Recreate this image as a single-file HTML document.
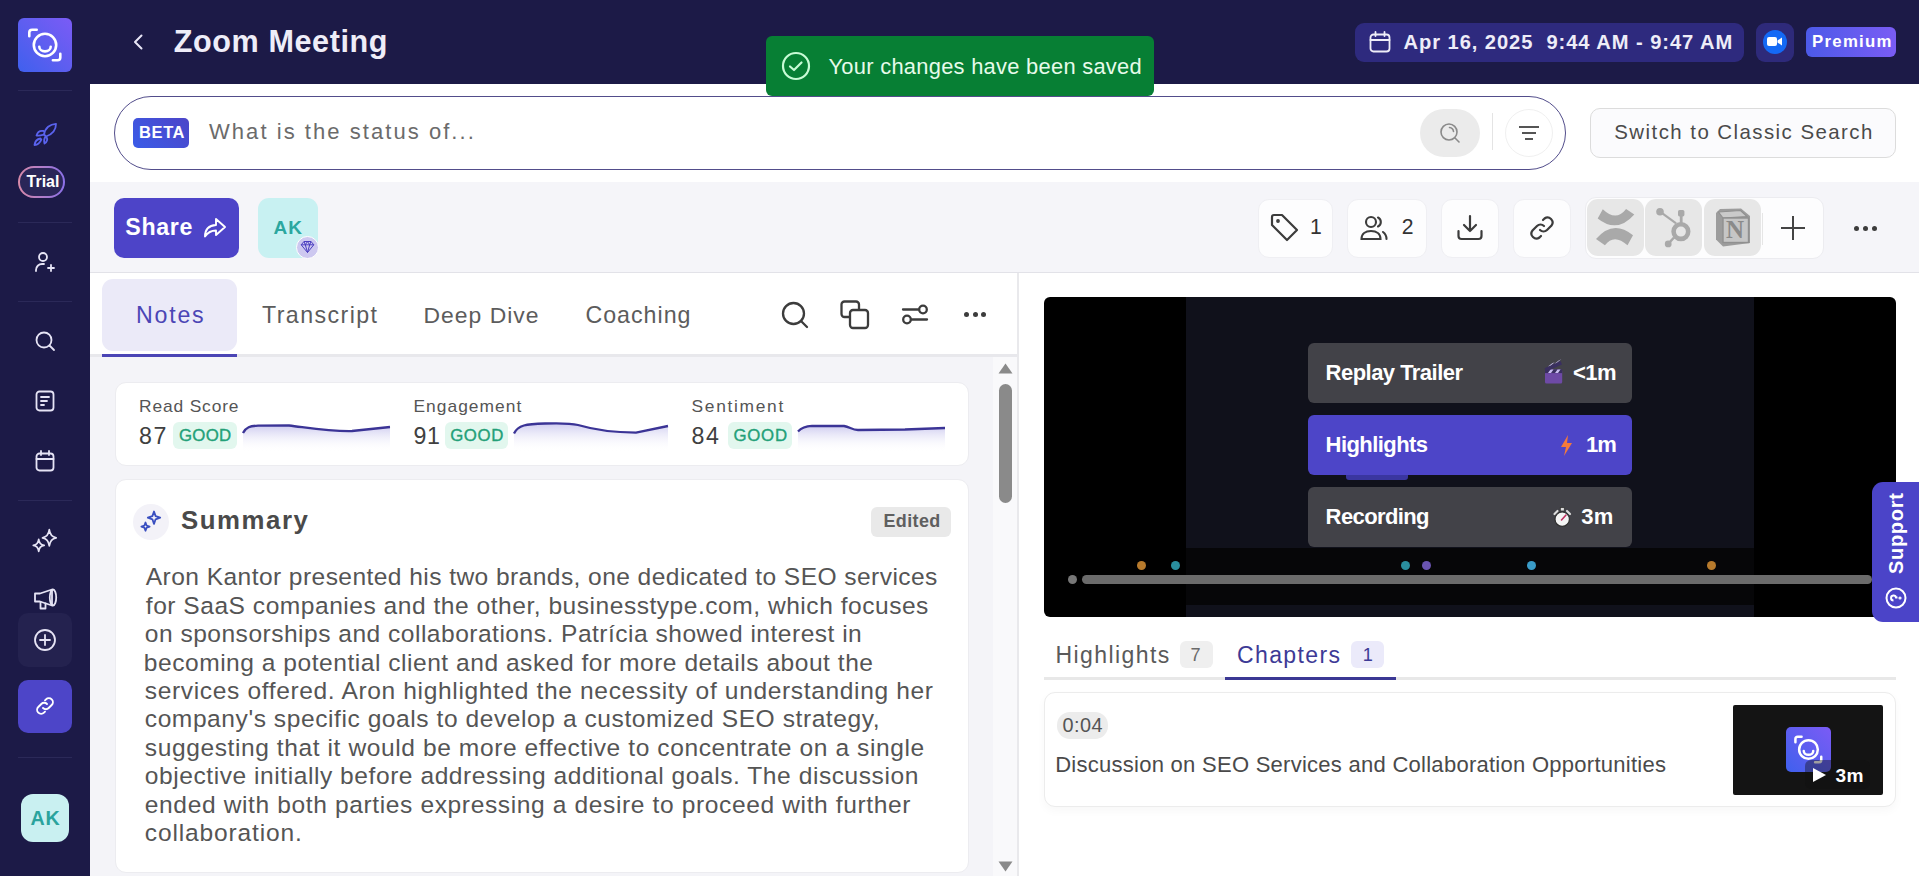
<!DOCTYPE html>
<html><head><meta charset="utf-8">
<style>
*{box-sizing:border-box;margin:0;padding:0}
html,body{width:1919px;height:876px;overflow:hidden;background:#fff;font-family:"Liberation Sans",sans-serif}
.a{position:absolute}
.nw{white-space:nowrap}
.sep{position:absolute;left:18px;width:54px;height:1px;background:#2b2958}
svg{position:absolute;overflow:visible}
</style></head><body>
<!-- ===== SIDEBAR ===== -->
<div class="a" style="left:0;top:0;width:90px;height:876px;background:#1c1a47">
  <div class="a" style="left:18px;top:18px;width:54px;height:54px;border-radius:6px;background:linear-gradient(45deg,#3f60ee 0%,#5e5ef0 50%,#7b5bf6 100%)">
    <svg style="left:0;top:0" width="54" height="54" viewBox="0 0 54 54" fill="none" stroke="#fff" stroke-width="2.6" stroke-linecap="round" stroke-linejoin="round">
      <circle cx="27" cy="27" r="11.2"/>
      <path d="M21.3 28.8 a5.7 4.6 0 0 0 11.4 0"/>
      <path d="M11.3 18.3 v-3.8 q0-2.8 2.8-2.8 h4.6"/>
      <path d="M42.3 35.7 v3.8 q0 2.8-2.8 2.8 h-4.6"/>
    </svg>
  </div>
  <div class="sep" style="top:90px"></div>
  <!-- rocket -->
  <svg style="left:25px;top:115px" width="40" height="40" viewBox="25 115 40 40" fill="none" stroke="#5a63ee" stroke-width="1.8" stroke-linecap="round" stroke-linejoin="round">
    <path d="M44 134.5 C45 128 50 124 56 123.8 C56 130 52 134.5 46 136.5 Z"/>
    <path d="M43.5 131 C40.5 130.5 37.5 132 36.5 135.5 C39 135.8 41.5 135.3 43.8 134.6"/>
    <path d="M46.5 137 C47.8 139.2 47.2 142 44.5 143.5 C43.8 141 44.2 138.5 45.3 136.9"/>
    <path d="M40.5 138.5 C37.5 139 35 141.5 34.5 145 C37.5 144.8 40 142.8 41.3 139.6 Z"/>
  </svg>
  <!-- trial -->
  <div class="a" style="left:18px;top:166px;width:47px;height:32px;border-radius:16px;background:linear-gradient(90deg,#d88aa8,#8a70e8);padding:2px">
    <div style="width:100%;height:100%;border-radius:14px;background:#2a2658"></div>
  </div>
  <div class="sep" style="top:222px"></div>
  <!-- add user -->
  <svg style="left:33px;top:250px" width="24" height="24" viewBox="0 0 24 24" fill="none" stroke="#e6e4f5" stroke-width="1.8" stroke-linecap="round">
    <circle cx="10" cy="7" r="4"/><path d="M3 21v-1a6 6 0 0 1 6-6h2"/><path d="M18 15v6M15 18h6"/>
  </svg>
  <div class="sep" style="top:301px"></div>
  <!-- search -->
  <svg style="left:34px;top:330px" width="22" height="22" viewBox="0 0 22 22" fill="none" stroke="#e6e4f5" stroke-width="1.8" stroke-linecap="round">
    <circle cx="10" cy="10" r="7.5"/><path d="M15.5 15.5l4.5 4.5"/>
  </svg>
  <!-- notes -->
  <svg style="left:35px;top:390px" width="20" height="22" viewBox="0 0 20 22" fill="none" stroke="#e6e4f5" stroke-width="1.8" stroke-linecap="round">
    <rect x="1.5" y="1.5" width="17" height="19" rx="3"/><path d="M6 7h8M6 11h6M6 15h3"/>
  </svg>
  <!-- calendar -->
  <svg style="left:35px;top:450px" width="20" height="22" viewBox="0 0 20 22" fill="none" stroke="#e6e4f5" stroke-width="1.8" stroke-linecap="round">
    <rect x="1.5" y="3.5" width="17" height="17" rx="3"/><path d="M1.5 9h17M6 1v4M14 1v4"/>
  </svg>
  <div class="sep" style="top:500px"></div>
  <!-- sparkles -->
  <svg style="left:25px;top:520px" width="40" height="40" viewBox="25 520 40 40" fill="none" stroke="#e6e4f5" stroke-width="1.7" stroke-linejoin="round">
    <path d="M49.3 529.7 Q50.2 536.8 56.2 537.8 Q50.2 538.8 49.3 546 Q48.4 538.8 42.5 537.8 Q48.4 536.8 49.3 529.7 Z"/>
    <path d="M38.7 539.3 Q39.3 544.6 44.2 545.3 Q39.3 546 38.7 551.3 Q38.1 546 33.3 545.3 Q38.1 544.6 38.7 539.3 Z"/>
  </svg>
  <!-- megaphone -->
  <svg style="left:25px;top:580px" width="40" height="40" viewBox="25 580 40 40" fill="none" stroke="#e6e4f5" stroke-width="1.8" stroke-linejoin="round" stroke-linecap="round">
    <path d="M35 593.5 h5 L52 589.5 V605.5 L40 601.5 h-5 z"/>
    <ellipse cx="53" cy="597.5" rx="3.2" ry="8"/>
    <path d="M40.5 601.8 V608.5 h5 V603.3"/>
  </svg>
  <div class="a" style="left:18px;top:613px;width:54px;height:54px;border-radius:10px;background:#24224f"></div>
  <svg style="left:33px;top:628px" width="24" height="24" viewBox="0 0 24 24" fill="none" stroke="#e6e4f5" stroke-width="1.8" stroke-linecap="round">
    <circle cx="12" cy="12" r="10"/><path d="M12 7v10M7 12h10"/>
  </svg>
  <div class="a" style="left:18px;top:680px;width:54px;height:53px;border-radius:10px;background:#4d45c8"></div>
  <svg style="left:33px;top:694px" width="24" height="24" viewBox="0 0 24 24" fill="none" stroke="#fff" stroke-width="1.9" stroke-linecap="round">
    <path d="M10 14a4 4 0 0 0 5.7 0l3-3a4 4 0 0 0-5.7-5.7l-1 1"/><path d="M14 10a4 4 0 0 0-5.7 0l-3 3a4 4 0 0 0 5.7 5.7l1-1"/>
  </svg>
  <div class="sep" style="top:757px"></div>
  <div class="a" style="left:21px;top:794px;width:48px;height:48px;border-radius:12px;background:#c9f0f1"></div>
  <div class="a nw" style="left:30.6px;top:806.67px;font-size:19.71px;letter-spacing:0.8px;font-weight:bold;color:#2aa39d">AK</div>
  <div class="a nw" style="left:26.6px;top:172.93px;font-size:15.94px;letter-spacing:0.0px;font-weight:bold;color:#fff">Trial</div>
</div>

<!-- ===== HEADER ===== -->
<div class="a" style="left:90px;top:0;width:1829px;height:84px;background:#1c1a47"></div>
<svg style="left:132px;top:34px" width="12" height="16" viewBox="0 0 12 16" fill="none" stroke="#e8e6f6" stroke-width="2" stroke-linecap="round" stroke-linejoin="round"><path d="M9.5 1.5L3 8l6.5 6.5"/></svg>
<div class="a nw" style="left:173.7px;top:24.17px;font-size:30.58px;letter-spacing:0.6px;font-weight:bold;color:#eeedf8">Zoom Meeting</div>

<div class="a" style="left:1355px;top:23px;width:389px;height:39px;border-radius:9px;background:#2e2a7e"></div>
<svg style="left:1369px;top:31px" width="22" height="22" viewBox="0 0 22 22" fill="none" stroke="#eeedf8" stroke-width="1.8" stroke-linecap="round">
  <rect x="1.5" y="3.5" width="19" height="17" rx="3"/><path d="M1.5 9h19M6.5 1v4M15.5 1v4"/>
</svg>
<div class="a nw" style="left:1403.5px;top:30.57px;font-size:20.14px;letter-spacing:0.94px;font-weight:bold;color:#eeedf8">Apr 16, 2025&nbsp;&nbsp;9:44 AM - 9:47 AM</div>

<div class="a" style="left:1756px;top:23px;width:38px;height:39px;border-radius:9px;background:#2e2a7a"></div>
<div class="a" style="left:1763px;top:30px;width:24px;height:24px;border-radius:12px;background:#1469f5"></div>
<svg style="left:1767px;top:36px" width="16" height="11" viewBox="0 0 16 11"><rect x="0" y="1" width="10" height="9" rx="2" fill="#fff"/><path d="M10.5 4.5L15 1.5v8l-4.5-3z" fill="#fff"/></svg>

<div class="a" style="left:1806px;top:27px;width:90px;height:30px;border-radius:6px;background:linear-gradient(90deg,#4c5ae8,#7a5cf4)"></div>
<div class="a nw" style="left:1812px;top:32.43px;font-size:16.81px;letter-spacing:1.267px;font-weight:bold;color:#fff">Premium</div>

<!-- ===== SEARCH ROW ===== -->
<div class="a" style="left:114px;top:96px;width:1452px;height:74px;border-radius:37px;border:1.5px solid #524d8b;background:#fff"></div>
<div class="a" style="left:133px;top:118px;width:56px;height:30px;border-radius:5px;background:linear-gradient(45deg,#3a5ce8,#4d45c8)"></div>
<div class="a nw" style="left:139px;top:123.4px;font-size:16.52px;letter-spacing:0.6px;font-weight:bold;color:#fff">BETA</div>
<div class="a nw" style="left:209px;top:119.33px;font-size:22.03px;letter-spacing:2.043px;color:#6b6b6b">What is the status of...</div>
<div class="a" style="left:1420px;top:109px;width:60px;height:48px;border-radius:24px;background:#ebebeb"></div>
<svg style="left:1439px;top:122px" width="22" height="22" viewBox="0 0 22 22" fill="none" stroke="#8a8a8a" stroke-width="1.6" stroke-linecap="round">
  <circle cx="10" cy="10" r="8"/><path d="M16 16l4 4"/><path d="M10.5 5.5a4.5 4.5 0 0 1 4 4"/>
</svg>
<div class="a" style="left:1492px;top:113px;width:1px;height:37px;background:#e4e4e4"></div>
<div class="a" style="left:1505px;top:109px;width:48px;height:48px;border-radius:24px;border:1px solid #f0f0f0"></div>
<div class="a" style="left:1519px;top:126px;width:20px;height:2px;background:#555"></div>
<div class="a" style="left:1522px;top:132px;width:14px;height:2px;background:#555"></div>
<div class="a" style="left:1525px;top:138px;width:8px;height:2px;background:#555"></div>

<div class="a" style="left:1590px;top:108px;width:306px;height:50px;border-radius:10px;border:1px solid #dcdcdc;background:#fbfbfd"></div>
<div class="a nw" style="left:1614.3px;top:121.2px;font-size:20.43px;letter-spacing:1.448px;color:#4a4a4a">Switch to Classic Search</div>

<!-- ===== ACTION BAR ===== -->
<div class="a" style="left:90px;top:182px;width:1829px;height:90px;background:#f5f5f9"></div>
<div class="a" style="left:90px;top:272px;width:1829px;height:1px;background:#e2e2e8"></div>
<div class="a" style="left:114px;top:198px;width:125px;height:60px;border-radius:10px;background:#4d44c8"></div>
<div class="a nw" style="left:125.3px;top:213.67px;font-size:23.19px;letter-spacing:0.675px;font-weight:bold;color:#fff">Share</div>
<svg style="left:203px;top:217px" width="24" height="22" viewBox="0 0 24 22" fill="none" stroke="#fff" stroke-width="1.9" stroke-linejoin="round"><path d="M13 2l9 8-9 8v-4.5c-5 0-8 1.5-11 6 0-6 3-11 11-11.5z"/></svg>
<div class="a" style="left:258px;top:198px;width:60px;height:60px;border-radius:11px;background:#c8f1f2"></div>
<div class="a nw" style="left:273.4px;top:216.87px;font-size:19.06px;letter-spacing:1.0px;font-weight:bold;color:#2ba79f">AK</div>
<div class="a" style="left:296px;top:236px;width:23px;height:23px;border-radius:12px;background:#cdc8f0;border:1.5px solid #fff"></div>
<svg style="left:300px;top:240px" width="15" height="14" viewBox="0 0 15 14" fill="none" stroke="#4a3ec0" stroke-width="1" stroke-linejoin="round"><path d="M4 1.5h7l2.8 3.3L7.5 12.5 1.2 4.8z M1.2 4.8h12.6 M5.3 4.8l2.2 7.7 2.2-7.7 M4 1.5l1.3 3.3 2.2-3.3 2.2 3.3L11 1.5"/></svg>

<!-- right action buttons -->
<div class="a" style="left:1258px;top:199px;width:75px;height:59px;border-radius:11px;background:#fdfdfe;border:1px solid #efeff3"></div>
<svg style="left:1270px;top:213px" width="30" height="30" viewBox="0 0 30 30" fill="none" stroke="#3c3c3c" stroke-width="2.2" stroke-linejoin="round" stroke-linecap="round"><path d="M2 4a2 2 0 0 1 2-2h8l15 15-10 10L2 12z"/><circle cx="8" cy="8" r="0.8" fill="#3c3c3c"/></svg>
<div class="a nw" style="left:1310px;top:215.13px;font-size:21.16px;letter-spacing:0px;color:#333">1</div>
<div class="a" style="left:1347px;top:199px;width:80px;height:59px;border-radius:11px;background:#fdfdfe;border:1px solid #efeff3"></div>
<svg style="left:1360px;top:214px" width="28" height="28" viewBox="0 0 28 28" fill="none" stroke="#3c3c3c" stroke-width="2.1" stroke-linecap="round"><circle cx="11" cy="8" r="5"/><path d="M1.5 25c0-5 4-8 9.5-8s9.5 3 9.5 8z"/><path d="M18 3.5a5 5 0 0 1 0 9"/><path d="M23 18c2 1.5 3.5 4 3.5 7"/></svg>
<div class="a nw" style="left:1401.7px;top:215.13px;font-size:21.16px;letter-spacing:0px;color:#333">2</div>
<div class="a" style="left:1441px;top:199px;width:58px;height:59px;border-radius:11px;background:#fdfdfe;border:1px solid #efeff3"></div>
<svg style="left:1457px;top:215px" width="26" height="26" viewBox="0 0 26 26" fill="none" stroke="#3c3c3c" stroke-width="2.2" stroke-linecap="round" stroke-linejoin="round"><path d="M13 1v15M7 10l6 6 6-6"/><path d="M1.5 16v5a3 3 0 0 0 3 3h17a3 3 0 0 0 3-3v-5"/></svg>
<div class="a" style="left:1513px;top:199px;width:58px;height:59px;border-radius:11px;background:#fdfdfe;border:1px solid #efeff3"></div>
<svg style="left:1529px;top:215px" width="26" height="26" viewBox="0 0 26 26" fill="none" stroke="#3c3c3c" stroke-width="2.2" stroke-linecap="round"><path d="M11 15a5 5 0 0 0 7 0l4.5-4.5a5 5 0 0 0-7-7l-1.5 1.5"/><path d="M15 11a5 5 0 0 0-7 0l-4.5 4.5a5 5 0 0 0 7 7l1.5-1.5"/></svg>

<div class="a" style="left:1585px;top:197px;width:239px;height:62px;border-radius:11px;background:#fdfdfe;border:1px solid #ececf0"></div>
<div class="a" style="left:1587px;top:199px;width:57px;height:57px;border-radius:11px;background:#e7e7e7"></div>
<div class="a" style="left:1645px;top:199px;width:57px;height:57px;border-radius:11px;background:#e7e7e7"></div>
<div class="a" style="left:1704px;top:199px;width:57px;height:57px;border-radius:11px;background:#e7e7e7"></div>
<svg style="left:1585px;top:198px" width="120" height="60" viewBox="1585 198 120 60"><g fill="#a9a9a9">
<path d="M1597.7 218.5 L1602.8 209.3 Q1616 222 1626.1 209 L1634.3 214.4 Q1617 234 1597.7 218.5 Z"/>
<path d="M1596 239.1 Q1613 219 1633 235.3 L1627.5 245.3 Q1614 233 1604.9 245.3 Z"/></g>
<g stroke="#a9a9a9" fill="none"><circle cx="1680.9" cy="231.6" r="7.3" stroke-width="4.6"/><path d="M1660 211.7 L1676.1 223.3" stroke-width="2.2"/><path d="M1681.2 214 V223" stroke-width="2.8"/><path d="M1668.2 243.9 L1674 237.5" stroke-width="2.4"/></g>
<g fill="#a9a9a9"><circle cx="1660" cy="211.7" r="3.8"/><rect x="1678" y="210" width="6.4" height="6.4" rx="1.6"/><circle cx="1668.2" cy="243.9" r="3.4"/></g>
</svg>

<svg style="left:1700px;top:198px" width="70" height="60" viewBox="1700 198 70 60">
<path d="M1716 213 L1720 209 L1741 208.5 L1750 216 L1750 243 L1723 246.5 L1716 239.5 Z" fill="#9c9c9c"/>
<path d="M1718.5 212 L1740.5 210.5 L1747 216.5 L1723 218 Z" fill="#cacaca" stroke="#909090" stroke-width="1.2"/>
<rect x="1723" y="218" width="25.5" height="24.5" fill="#c6c6c6" stroke="#909090" stroke-width="1.4"/>
<text x="1735" y="238.4" font-family="Liberation Serif" font-weight="bold" font-size="25" fill="#8a8a8a" text-anchor="middle">N</text>
</svg>
<div class="a" style="left:1762px;top:213px;width:1px;height:32px;background:#e6e6e6"></div>
<div class="a" style="left:1781px;top:227px;width:24px;height:2px;background:#444"></div>
<div class="a" style="left:1792px;top:216px;width:2px;height:24px;background:#444"></div>
<div class="a" style="left:1854px;top:226px;width:5px;height:5px;border-radius:3px;background:#3c3c3c"></div>
<div class="a" style="left:1863px;top:226px;width:5px;height:5px;border-radius:3px;background:#3c3c3c"></div>
<div class="a" style="left:1872px;top:226px;width:5px;height:5px;border-radius:3px;background:#3c3c3c"></div>

<!-- ===== LEFT PANEL ===== -->
<div class="a" style="left:90px;top:273px;width:928px;height:603px;background:#f4f4f8"></div>
<div class="a" style="left:90px;top:273px;width:928px;height:81px;background:#fff"></div>
<div class="a" style="left:90px;top:354px;width:928px;height:3px;background:#e8e8ec"></div>
<div class="a" style="left:1017px;top:273px;width:2px;height:603px;background:#e9e9ec"></div>
<div class="a" style="left:102px;top:279px;width:135px;height:72px;border-radius:11px;background:#ebeaf8"></div>
<div class="a" style="left:102px;top:354px;width:135px;height:3px;background:#4b45b5"></div>
<div class="a nw" style="left:136.1px;top:301.67px;font-size:23.19px;letter-spacing:1.75px;color:#4b45b5">Notes</div>
<div class="a nw" style="left:262px;top:301.67px;font-size:23.19px;letter-spacing:1.422px;color:#5c5c5c">Transcript</div>
<div class="a nw" style="left:423.4px;top:301.83px;font-size:22.9px;letter-spacing:1.038px;color:#5c5c5c">Deep Dive</div>
<div class="a nw" style="left:585.4px;top:301.67px;font-size:23.19px;letter-spacing:1.014px;color:#5c5c5c">Coaching</div>
<svg style="left:782px;top:302px" width="26" height="26" viewBox="0 0 26 26" fill="none" stroke="#3c3c3c" stroke-width="2.3" stroke-linecap="round"><circle cx="11.5" cy="11.5" r="10.5"/><path d="M19 19l6 6"/></svg>
<svg style="left:840px;top:300px" width="30" height="30" viewBox="0 0 30 30" fill="none" stroke="#3c3c3c" stroke-width="2.3" stroke-linejoin="round"><path d="M9 17H4.5a3 3 0 0 1-3-3V4.5a3 3 0 0 1 3-3H16a3 3 0 0 1 3 3V9"/><rect x="10" y="10" width="18" height="18" rx="3"/></svg>
<svg style="left:902px;top:303px" width="27" height="22" viewBox="0 0 27 22" fill="none" stroke="#3c3c3c" stroke-width="2.3" stroke-linecap="round"><path d="M1 6.5h16M25 16.5H9"/><circle cx="21" cy="6.5" r="3.8"/><circle cx="5" cy="16.5" r="3.8"/></svg>
<div class="a" style="left:964px;top:312px;width:5px;height:5px;border-radius:3px;background:#3c3c3c"></div>
<div class="a" style="left:973px;top:312px;width:5px;height:5px;border-radius:3px;background:#3c3c3c"></div>
<div class="a" style="left:981px;top:312px;width:5px;height:5px;border-radius:3px;background:#3c3c3c"></div>

<!-- scrollbar -->
<div class="a" style="left:993px;top:357px;width:24px;height:519px;background:#f9f9fb"></div>
<svg style="left:998px;top:363px" width="15" height="11" viewBox="0 0 15 11"><path d="M7.5 0.5L14.5 10.5H0.5z" fill="#8a8a8a"/></svg>
<div class="a" style="left:999px;top:384px;width:13px;height:119px;border-radius:7px;background:#8a8a8a"></div>
<svg style="left:998px;top:861px" width="15" height="11" viewBox="0 0 15 11"><path d="M7.5 10.5L14.5 0.5H0.5z" fill="#8a8a8a"/></svg>

<!-- metrics card -->
<div class="a" style="left:115px;top:382px;width:854px;height:84px;border-radius:11px;background:#fff;border:1px solid #ececf0"></div>
<div class="a nw" style="left:139px;top:396.0px;font-size:17.39px;letter-spacing:0.856px;color:#555">Read Score</div>
<div class="a nw" style="left:139px;top:422.67px;font-size:23.19px;letter-spacing:1.5px;color:#404040">87</div>
<div class="a" style="left:173px;top:422px;width:64px;height:27px;border-radius:6px;background:#e2f7ee"></div>
<div class="a nw" style="left:179px;top:426.43px;font-size:16.81px;letter-spacing:0.267px;color:#23a078;-webkit-text-stroke:0.35px #23a078">GOOD</div>
<div class="a nw" style="left:413.5px;top:396.0px;font-size:17.39px;letter-spacing:1.022px;color:#555">Engagement</div>
<div class="a nw" style="left:413.5px;top:422.67px;font-size:23.19px;letter-spacing:0.5px;color:#404040">91</div>
<div class="a" style="left:445px;top:422px;width:63px;height:27px;border-radius:6px;background:#e2f7ee"></div>
<div class="a nw" style="left:450.2px;top:426.43px;font-size:16.81px;letter-spacing:0.6px;color:#23a078;-webkit-text-stroke:0.35px #23a078">GOOD</div>
<div class="a nw" style="left:691.5px;top:396.0px;font-size:17.39px;letter-spacing:1.688px;color:#555">Sentiment</div>
<div class="a nw" style="left:691.5px;top:422.67px;font-size:23.19px;letter-spacing:1.5px;color:#404040">84</div>
<div class="a" style="left:728px;top:422px;width:64px;height:27px;border-radius:6px;background:#e2f7ee"></div>
<div class="a nw" style="left:733.6px;top:426.43px;font-size:16.81px;letter-spacing:0.7px;color:#23a078;-webkit-text-stroke:0.35px #23a078">GOOD</div>
<svg style="left:0;top:0" width="1919" height="876" viewBox="0 0 1919 876">
  <defs><linearGradient id="sg" x1="0" y1="0" x2="0" y2="1"><stop offset="0" stop-color="#c9c6ee" stop-opacity="0.9"/><stop offset="1" stop-color="#fff" stop-opacity="0"/></linearGradient></defs>
  <path d="M243 433 C246 427 250 426 258 425.6 L289 425.5 C310 428 330 431.5 352 431 L390 427 L390 452 L243 452z" fill="url(#sg)"/>
  <path d="M243 433 C246 427 250 426 258 425.6 L289 425.5 C310 428 330 431.5 352 431 L390 427" fill="none" stroke="#3b3496" stroke-width="2.3"/>
  <path d="M514 433.5 C518 425 526 424 545 423.5 C560 423 570 423 578 425 C595 430 615 432.5 636 432.6 L668 426 L668 452 L514 452z" fill="url(#sg)"/>
  <path d="M514 433.5 C518 425 526 424 545 423.5 C560 423 570 423 578 425 C595 430 615 432.5 636 432.6 L668 426" fill="none" stroke="#3b3496" stroke-width="2.3"/>
  <path d="M798 431.5 C802 427 806 426 812 425.8 L844 426 C850 427 852 430 858 430 L905 429.5 L945 428 L945 452 L798 452z" fill="url(#sg)"/>
  <path d="M798 431.5 C802 427 806 426 812 425.8 L844 426 C850 427 852 430 858 430 L905 429.5 L945 428" fill="none" stroke="#3b3496" stroke-width="2.3"/>
</svg>

<!-- summary card -->
<div class="a" style="left:115px;top:479px;width:854px;height:394px;border-radius:11px;background:#fff;border:1px solid #ececf0"></div>
<div class="a" style="left:133px;top:504px;width:36px;height:36px;border-radius:18px;background:#f3f2f8"></div>
<svg style="left:139px;top:509px" width="26" height="26" viewBox="0 0 26 26" fill="none" stroke="#3a4fc0" stroke-width="1.8" stroke-linejoin="round"><path d="M15 2.5l1.6 4.6 4.6 1.6-4.6 1.6-1.6 4.6-1.6-4.6-4.6-1.6 4.6-1.6z"/><path d="M6.5 13.5l1.1 3 3 1.1-3 1.1-1.1 3-1.1-3-3-1.1 3-1.1z"/></svg>
<div class="a nw" style="left:180.9px;top:506.27px;font-size:25.8px;letter-spacing:1.567px;font-weight:bold;color:#4a4a4a">Summary</div>
<div class="a" style="left:871px;top:507px;width:80px;height:30px;border-radius:6px;background:#e9e9e9"></div>
<div class="a nw" style="left:883.5px;top:511.47px;font-size:17.97px;letter-spacing:0.38px;font-weight:bold;color:#5f5f5f">Edited</div>
<div class="a nw" style="left:145.8px;top:563.2px;font-size:24.57px;letter-spacing:0.429px;color:#555">Aron Kantor presented his two brands, one dedicated to SEO services</div>
<div class="a nw" style="left:145.8px;top:591.65px;font-size:24.57px;letter-spacing:0.516px;color:#555">for SaaS companies and the other, businesstype.com, which focuses</div>
<div class="a nw" style="left:144.8px;top:620.1px;font-size:24.57px;letter-spacing:0.487px;color:#555">on sponsorships and collaborations. Patrícia showed interest in</div>
<div class="a nw" style="left:143.8px;top:648.55px;font-size:24.57px;letter-spacing:0.521px;color:#555">becoming a potential client and asked for more details about the</div>
<div class="a nw" style="left:144.8px;top:677.0px;font-size:24.57px;letter-spacing:0.634px;color:#555">services offered. Aron highlighted the necessity of understanding her</div>
<div class="a nw" style="left:144.8px;top:705.45px;font-size:24.57px;letter-spacing:0.561px;color:#555">company's specific goals to develop a customized SEO strategy,</div>
<div class="a nw" style="left:144.8px;top:733.9px;font-size:24.57px;letter-spacing:0.585px;color:#555">suggesting that it would be more effective to concentrate on a single</div>
<div class="a nw" style="left:144.8px;top:762.35px;font-size:24.57px;letter-spacing:0.551px;color:#555">objective initially before addressing additional goals. The discussion</div>
<div class="a nw" style="left:144.8px;top:790.8px;font-size:24.57px;letter-spacing:0.617px;color:#555">ended with both parties expressing a desire to proceed with further</div>
<div class="a nw" style="left:144.8px;top:819.25px;font-size:24.57px;letter-spacing:0.838px;color:#555">collaboration.</div>
</div>

<!-- ===== RIGHT PANEL ===== -->
<div class="a" style="left:1044px;top:297px;width:852px;height:320px;border-radius:6px;background:#000;overflow:hidden">
  <div class="a" style="left:142px;top:0;width:568px;height:320px;background:#10111b"></div>
  <div class="a" style="left:142px;top:251px;width:568px;height:57px;background:#060608"></div>
</div>
<div class="a" style="left:1308px;top:343px;width:324px;height:60px;border-radius:6px;background:#424248"></div>
<div class="a nw" style="left:1325.6px;top:359.63px;font-size:22.03px;letter-spacing:-0.538px;font-weight:bold;color:#fff">Replay Trailer</div>
<svg style="left:1540px;top:355px" width="40" height="35" viewBox="1540 355 40 35">
<rect x="1545" y="369.5" width="17.2" height="14" rx="1.5" fill="#6e4aa6"/>
<rect x="1545" y="369.5" width="17.2" height="3.6" fill="#3a2f60"/>
<path d="M1548 373 l2.5-3.5 h3 l-2.5 3.5z M1555 373 l2.5-3.5 h3 l-2.5 3.5z" fill="#c9bdf0"/>
<path d="M1544.5 368.2 L1560.5 361 L1562 364.4 L1546 371.5 Z" fill="#3a2f60"/>
<path d="M1548 366.6 l4.2-3.3 l2.6-1.1 l-4.2 3.3z M1554.5 363.7 l4.2-3.3 l2.6-1.1 l-4.2 3.3z" fill="#c9bdf0"/>
</svg>
<div class="a nw" style="left:1572.9px;top:359.63px;font-size:22.03px;letter-spacing:-0.5px;font-weight:bold;color:#fff">&lt;1m</div>
<div class="a" style="left:1346px;top:470px;width:62px;height:10px;border-radius:3px;background:#3a36a0"></div>
<div class="a" style="left:1308px;top:415px;width:324px;height:60px;border-radius:6px;background:#4d45c8"></div>
<div class="a nw" style="left:1325.6px;top:431.63px;font-size:22.03px;letter-spacing:-0.567px;font-weight:bold;color:#fff">Highlights</div>
<svg style="left:1560px;top:435px" width="13" height="21" viewBox="0 0 13 21"><path d="M8 0L1 12h5l-2 9 8-13H7z" fill="#f47a3a"/></svg>
<div class="a nw" style="left:1586px;top:431.63px;font-size:22.03px;letter-spacing:-1.0px;font-weight:bold;color:#fff">1m</div>
<div class="a" style="left:1308px;top:487px;width:324px;height:60px;border-radius:6px;background:#424248"></div>
<div class="a nw" style="left:1325.6px;top:503.63px;font-size:22.03px;letter-spacing:-0.612px;font-weight:bold;color:#fff">Recording</div>
<svg style="left:1548px;top:500px" width="30" height="30" viewBox="1548 500 30 30">
<rect x="1560.3" y="507.5" width="4" height="3.5" fill="#ddd" stroke="#333" stroke-width="0.8"/>
<path d="M1554.5 514 l3-3" stroke="#ddd" stroke-width="2.2" stroke-linecap="round"/>
<path d="M1570 514 l-3-3" stroke="#ddd" stroke-width="2.2" stroke-linecap="round"/>
<circle cx="1562.2" cy="519.2" r="7.2" fill="#f4f4f4" stroke="#2f2f2f" stroke-width="1.2"/>
<path d="M1561.5 520 L1566 515" stroke="#c03060" stroke-width="1.6" stroke-linecap="round"/>
</svg>
<div class="a nw" style="left:1581.3px;top:503.63px;font-size:22.03px;letter-spacing:0.3px;font-weight:bold;color:#fff">3m</div>

<div class="a" style="left:1068px;top:575px;width:9px;height:9px;border-radius:5px;background:#777"></div>
<div class="a" style="left:1082px;top:575px;width:790px;height:9px;border-radius:5px;background:#6b6b6b"></div>
<div class="a" style="left:1137px;top:561px;width:9px;height:9px;border-radius:5px;background:#b77a2c"></div>
<div class="a" style="left:1171px;top:561px;width:9px;height:9px;border-radius:5px;background:#2a8e9e"></div>
<div class="a" style="left:1401px;top:561px;width:9px;height:9px;border-radius:5px;background:#2a8e9e"></div>
<div class="a" style="left:1422px;top:561px;width:9px;height:9px;border-radius:5px;background:#6a54b0"></div>
<div class="a" style="left:1527px;top:561px;width:9px;height:9px;border-radius:5px;background:#3a9cc8"></div>
<div class="a" style="left:1707px;top:561px;width:9px;height:9px;border-radius:5px;background:#b77a2c"></div>

<!-- support tab -->
<div class="a" style="left:1872px;top:482px;width:60px;height:140px;border-radius:11px;background:#4b44c8"></div>
<div class="a nw" style="left:1860px;top:526px;width:72px;height:24px;transform:rotate(-90deg);transform-origin:36px 12px;font-size:20px;font-weight:bold;color:#fff;text-align:center;line-height:24px;letter-spacing:0.7px">Support</div>
<svg style="left:1885px;top:587px" width="22" height="22" viewBox="0 0 22 22" fill="none" stroke="#fff" stroke-width="2"><circle cx="11" cy="11" r="9.5"/><path d="M8.5 8.5a2.5 2.5 0 1 1 3 2.5v1.5" transform="rotate(-90 11 11)"/><circle cx="15" cy="11" r="0.6" fill="#fff"/></svg>

<!-- tabs -->
<div class="a nw" style="left:1055.4px;top:641.5px;font-size:23.04px;letter-spacing:1.411px;color:#5a5a5a">Highlights</div>
<div class="a" style="left:1180px;top:641px;width:33px;height:27px;border-radius:6px;background:#efefef"></div>
<div class="a nw" style="left:1190.5px;top:644.63px;font-size:18.12px;letter-spacing:0px;color:#6a6a6a">7</div>
<div class="a nw" style="left:1237px;top:641.5px;font-size:23.04px;letter-spacing:1.371px;color:#3d3a96">Chapters</div>
<div class="a" style="left:1351px;top:641px;width:33px;height:27px;border-radius:6px;background:#ebeafa"></div>
<div class="a nw" style="left:1362.8px;top:644.63px;font-size:18.12px;letter-spacing:0px;color:#3d3a96">1</div>
<div class="a" style="left:1044px;top:677px;width:852px;height:3px;background:#e8e8e8"></div>
<div class="a" style="left:1225px;top:677px;width:171px;height:3px;background:#3b3894"></div>

<!-- chapter card -->
<div class="a" style="left:1044px;top:692px;width:852px;height:115px;border-radius:11px;background:#fff;border:1px solid #ececec;box-shadow:0 4px 10px rgba(0,0,0,0.03)"></div>
<div class="a" style="left:1057px;top:712px;width:51px;height:27px;border-radius:13px;background:#ececec"></div>
<div class="a nw" style="left:1062.6px;top:714.23px;font-size:19.86px;letter-spacing:0.467px;color:#555">0:04</div>
<div class="a nw" style="left:1055.2px;top:752.23px;font-size:22.03px;letter-spacing:0.26px;color:#4a4a4a">Discussion on SEO Services and Collaboration Opportunities</div>
<div class="a" style="left:1733px;top:705px;width:150px;height:90px;border-radius:2px;background:#141414"></div>
<div class="a" style="left:1786px;top:727px;width:45px;height:45px;border-radius:5px;background:linear-gradient(45deg,#3f60ee 0%,#5e5ef0 50%,#7b5bf6 100%)"></div>
<svg style="left:1786px;top:727px" width="45" height="45" viewBox="0 0 54 54" fill="none" stroke="#fff" stroke-width="3" stroke-linecap="round"><circle cx="27" cy="27" r="11.2"/><path d="M21.3 28.8 a5.7 4.6 0 0 0 11.4 0"/><path d="M11.3 18.3 v-3.8 q0-2.8 2.8-2.8 h4.6"/><path d="M42.3 35.7 v3.8 q0 2.8-2.8 2.8 h-4.6"/></svg>
<div class="a" style="left:1805px;top:760px;width:65px;height:29px;border-radius:6px;background:rgba(15,15,15,0.4)"></div>
<svg style="left:1813px;top:768px" width="13" height="14" viewBox="0 0 13 14"><path d="M0 0L13 7 0 14z" fill="#fff"/></svg>
<div class="a nw" style="left:1835.6px;top:764.6px;font-size:19.13px;letter-spacing:0.3px;font-weight:bold;color:#fff">3m</div>

<!-- toast -->
<div class="a" style="left:766px;top:36px;width:388px;height:60px;border-radius:6px;background:#077f34"></div>
<svg style="left:781px;top:51px" width="30" height="30" viewBox="0 0 30 30" fill="none" stroke="#c8fbd5" stroke-width="2.2" stroke-linecap="round" stroke-linejoin="round"><circle cx="15" cy="15" r="13"/><path d="M9 15.5l4 3.5 7.5-7.5"/></svg>
<div class="a nw" style="left:828.5px;top:53.77px;font-size:21.88px;letter-spacing:0.278px;color:#e6fbea">Your changes have been saved</div>
</body></html>
